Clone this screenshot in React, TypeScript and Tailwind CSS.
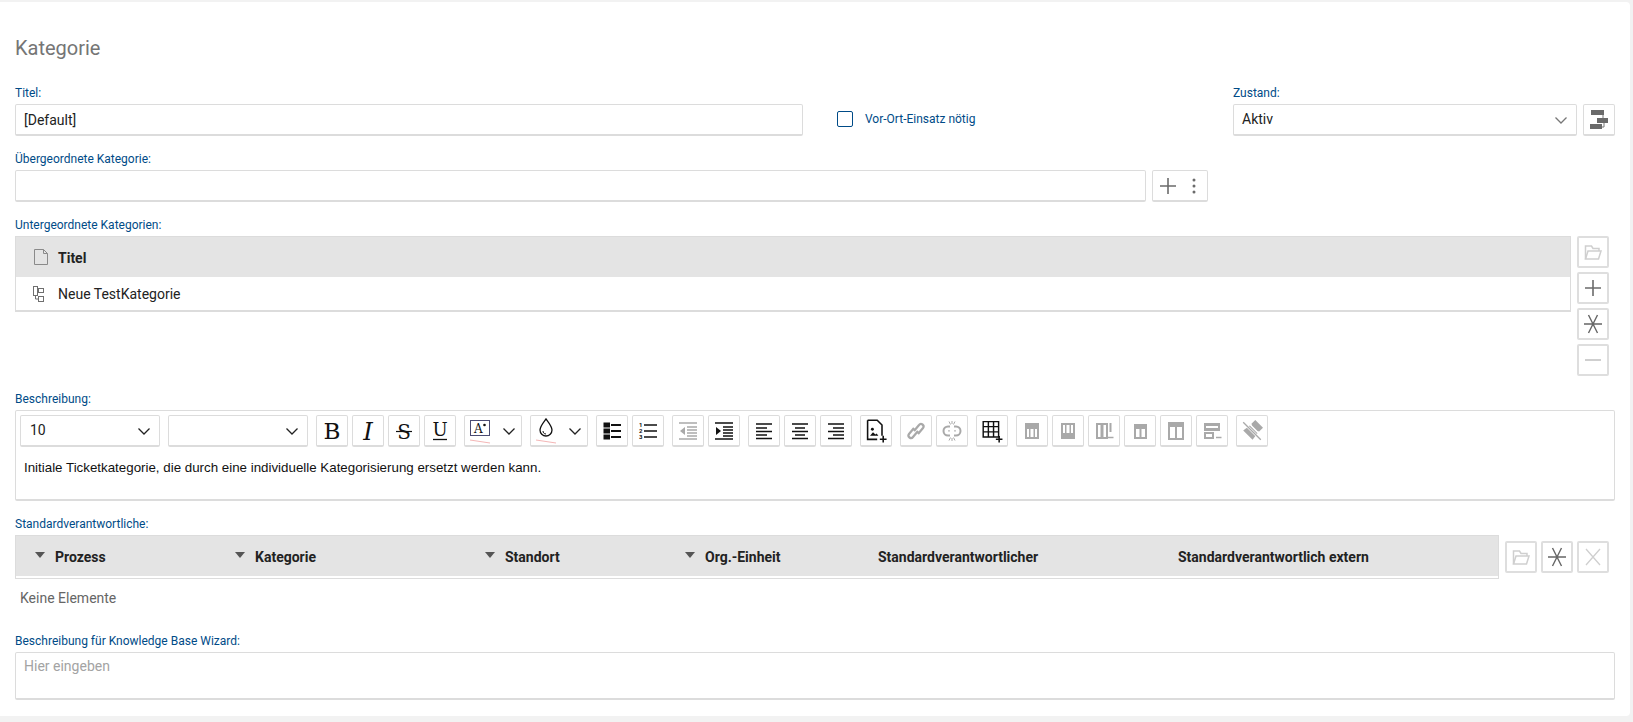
import type { ReactNode } from 'react';

const BLACK = '#111';
const GRAY = '#a9a9a9';

function Label({ children }: { children: ReactNode }) {
  return <div className="mb-[3px] h-4 text-[12px] leading-4 text-[#004b87]">{children}</div>;
}

function Box({ className, children }: { className: string; children?: ReactNode }) {
  return (
    <div className={`flex h-8 items-center rounded-[2px] border border-b-2 border-[#dcdcdc] bg-white ${className}`}>
      {children}
    </div>
  );
}

function Chevron({ className }: { className: string }) {
  return (
    <svg width="14" height="14" viewBox="0 0 14 14" fill="none" stroke="currentColor" strokeWidth="1.3" className={className}>
      <path d="M1.5 4.5 7 10l5.5-5.5" />
    </svg>
  );
}

function SideButton({ children }: { children: ReactNode }) {
  return (
    <button className="flex h-8 w-8 items-center justify-center rounded-[2px] border-2 border-[#dedede] bg-white">
      {children}
    </button>
  );
}

function ToolButton({ children, wide }: { children: ReactNode; wide?: boolean }) {
  return (
    <button
      className={`relative flex h-8 shrink-0 items-center justify-center rounded-[2px] border border-b-2 border-[#dcdcdc] bg-white ${wide ? 'w-[58px]' : 'w-8'}`}
    >
      {children}
    </button>
  );
}

function Ico({ children, size = 20 }: { children: ReactNode; size?: number }) {
  return (
    <svg width={size} height={size} viewBox="0 0 20 20" fill="none" className="overflow-visible">
      {children}
    </svg>
  );
}

function PlusIcon() {
  return (
    <Ico>
      <path d="M10 2v16M2 10h16" stroke="#6b6b6b" strokeWidth="1.6" />
    </Ico>
  );
}

function MinusIcon() {
  return (
    <Ico>
      <path d="M2 10h16" stroke="#c4c4c4" strokeWidth="1.6" />
    </Ico>
  );
}

function AsteriskIcon() {
  return (
    <Ico>
      <path d="M1 10h18M5.500 1l9 18M14.500 1l-9 18" stroke="#666" strokeWidth="1.400" />
    </Ico>
  );
}

function CloseIcon() {
  return (
    <Ico>
      <path d="M3 2l14 16M17 2L3 18" stroke="#cfcfcf" strokeWidth="1.300" />
    </Ico>
  );
}

function FolderIcon() {
  return (
    <Ico>
      <path d="M2.500 17V4h6l1.500 2.500h6V9" stroke="#cfcfcf" strokeWidth="1.500" />
      <path d="M2.500 17 5 9h13l-2.500 8z" stroke="#cfcfcf" strokeWidth="1.500" />
    </Ico>
  );
}

function WorkflowIcon() {
  return (
    <svg width="20" height="19" viewBox="0 0 20 19" fill="none">
      <path d="M14 5v4M15 13v4h-4" stroke="#777" strokeWidth="1" />
      <rect x="2" y="0" width="13" height="5" fill="#6a6a6a" />
      <rect x="8" y="8" width="11" height="5" fill="#6a6a6a" />
      <rect x="1" y="14" width="12" height="5" fill="#6a6a6a" />
    </svg>
  );
}

function DocIcon() {
  return (
    <svg width="14" height="16" viewBox="0 0 14 16" fill="none" stroke="#8a8a8a" strokeWidth="1">
      <path d="M.5.5h9l4 4v11H.500z" />
      <path d="M9.500.5v4h4" />
    </svg>
  );
}

function TreeIcon() {
  return (
    <svg width="11" height="16" viewBox="0 0 11 16" fill="none" stroke="#6f6f6f" strokeWidth="1">
      <rect x=".5" y=".5" width="4" height="9" />
      <rect x="5.500" y="2.500" width="5" height="4" />
      <rect x="5.500" y="10.500" width="5" height="5" />
      <path d="M2.500 9.500v3.500h3" />
    </svg>
  );
}

function SortHead({ children }: { children: ReactNode }) {
  return (
    <div className="flex items-center gap-[10px]">
      <span className="mb-[5px] h-0 w-0 border-x-[5px] border-t-[6px] border-x-transparent border-t-[#555]" />
      <span>{children}</span>
    </div>
  );
}

function ListLines({ x, color, width = 1.800 }: { x: number; color: string; width?: number }) {
  return <path d={`M${x} 4h${19 - x}M${x} 10h${19 - x}M${x} 16h${19 - x}`} stroke={color} strokeWidth={width} />;
}

function IndentIcon({ color, dir }: { color: string; dir: 'in' | 'out' }) {
  return (
    <Ico>
      <path d="M1 2h18M9 6h10M9 9h10M9 12h10M9 15h10M1 18h18" stroke={color} strokeWidth="1.300" />
      <path d={dir === 'in' ? 'M2 6l5 4-5 4z' : 'M7 6l-5 4 5 4z'} fill={color} />
    </Ico>
  );
}

function AlignIcon({ rows }: { rows: string }) {
  return (
    <Ico>
      <path d={rows} stroke={BLACK} strokeWidth="1.300" />
    </Ico>
  );
}

function TableGlyph({ d, minus }: { d: string; minus?: boolean }) {
  return (
    <Ico>
      <path fillRule="evenodd" clipRule="evenodd" d={d} fill={GRAY} />
      {minus && <path d="M14 16.500h5.500" stroke={GRAY} strokeWidth="1.500" />}
    </Ico>
  );
}

function GlyphIcon({ glyph, italic, size, y }: { glyph: string; italic?: boolean; size: number; y: number }) {
  return (
    <text
      x="10"
      y={y}
      textAnchor="middle"
      fontSize={size}
      fontStyle={italic ? 'italic' : 'normal'}
      fontFamily="DejaVu Serif, serif"
      fill={BLACK}
    >
      {glyph}
    </text>
  );
}

function Toolbar() {
  return (
    <div className="flex items-center gap-2">
      <Box className="w-[140px] justify-between pl-[9px] pr-[8px]">
        <span className="text-[14px] text-[#222]">10</span>
        <Chevron className="text-[#222]" />
      </Box>
      <Box className="w-[140px] justify-end pr-[8px]">
        <Chevron className="text-[#222]" />
      </Box>
      <div className="flex gap-1">
        <ToolButton>
          <Ico size={22}>
            <GlyphIcon glyph="B" size={21} y={17.500} />
          </Ico>
        </ToolButton>
        <ToolButton>
          <Ico size={22}>
            <GlyphIcon glyph="I" italic size={22} y={18} />
          </Ico>
        </ToolButton>
        <ToolButton>
          <Ico>
            <GlyphIcon glyph="S" size={20} y={17.500} />
            <path d="M2 10.500h16" stroke={BLACK} strokeWidth="1.200" />
          </Ico>
        </ToolButton>
        <ToolButton>
          <Ico>
            <GlyphIcon glyph="U" size={18} y={15} />
            <path d="M3 18.500h14" stroke={BLACK} strokeWidth="1.300" />
          </Ico>
        </ToolButton>
      </div>
      <div className="flex gap-2">
        <ToolButton wide>
          <div className="flex w-full items-center pl-[4px]">
            <svg width="22" height="28" viewBox="0 0 22 28" fill="none">
              <rect x="1.500" y="3.500" width="19" height="15" stroke="#4b4b73" strokeWidth="1" />
              <text x="5" y="16" fontSize="12" fill="#111" fontFamily="DejaVu Serif, serif">A</text>
              <circle cx="15.500" cy="8" r="1.300" fill="#111" />
              <path d="M1 23l20 3" stroke="#f4b6b6" strokeWidth="1" />
            </svg>
            <Chevron className="ml-[11px] text-[#222]" />
          </div>
        </ToolButton>
        <ToolButton wide>
          <div className="flex w-full items-center pl-[4px]">
            <svg width="22" height="28" viewBox="0 0 22 28" fill="none">
              <path d="M11 2c3 4 6 7.500 6 11a6 6 0 0 1-12 0C5 9.500 8 6 11 2z" stroke="#111" strokeWidth="1.300" />
              <path d="M8 14c0 1.500 1 3 3 3" stroke="#111" strokeWidth="1" />
              <path d="M1 23l20 3" stroke="#f4b6b6" strokeWidth="1" />
            </svg>
            <Chevron className="ml-[11px] text-[#222]" />
          </div>
        </ToolButton>
      </div>
      <div className="flex gap-1">
        <ToolButton>
          <Ico>
            <rect x="1.500" y="1.500" width="6.500" height="5" fill={BLACK} />
            <rect x="1.500" y="7.500" width="6.500" height="5" fill={BLACK} />
            <rect x="1.500" y="13.500" width="6.500" height="5" fill={BLACK} />
            <ListLines x={9} color={BLACK} />
          </Ico>
        </ToolButton>
        <ToolButton>
          <Ico>
            <text x="1" y="6" fontSize="6" fontWeight="700" fill={BLACK}>1</text>
            <text x="1" y="12" fontSize="6" fontWeight="700" fill={BLACK}>2</text>
            <text x="1" y="18" fontSize="6" fontWeight="700" fill={BLACK}>3</text>
            <ListLines x={6} color={BLACK} width={1.500} />
          </Ico>
        </ToolButton>
      </div>
      <div className="flex gap-1">
        <ToolButton>
          <IndentIcon color={GRAY} dir="out" />
        </ToolButton>
        <ToolButton>
          <IndentIcon color={BLACK} dir="in" />
        </ToolButton>
      </div>
      <div className="flex gap-1">
        <ToolButton>
          <AlignIcon rows="M2 3h16M2 7h11M2 10.500h16M2 14h11M2 17.500h16" />
        </ToolButton>
        <ToolButton>
          <AlignIcon rows="M2 3h16M5 7h10M2 10.500h16M5 14h10M2 17.500h16" />
        </ToolButton>
        <ToolButton>
          <AlignIcon rows="M2 3h16M7 7h11M2 10.500h16M7 14h11M2 17.500h16" />
        </ToolButton>
      </div>
      <ToolButton>
        <Ico size={24}>
          <path d="M3 1h8l4 4v9M3 1v16h8" stroke={BLACK} strokeWidth="1.300" />
          <path d="M5 14l2.500-3 2 2 1-1 1.500 2z" fill={BLACK} />
          <circle cx="7" cy="8.500" r="1.200" fill={BLACK} />
          <path d="M16 14v5.500M13.200 16.800h5.600" stroke={BLACK} strokeWidth="1.300" />
        </Ico>
      </ToolButton>
      <div className="flex gap-1">
        <ToolButton>
          <Ico>
            <path d="M8 10l5-6a2.500 2.500 0 0 1 4 3l-5 6M12 10l-5 6a2.500 2.500 0 0 1-4-3l5-6" stroke={GRAY} strokeWidth="2.200" />
          </Ico>
        </ToolButton>
        <ToolButton>
          <Ico>
            <path d="M8 5.500H6a4.500 4.500 0 0 0 0 9h2M12 5.500h2a4.500 4.500 0 0 1 0 9h-2" stroke={GRAY} strokeWidth="2" />
            <path d="M6 9.900h2M12 9.900h2M7 .5l1.500 3M13 .5l-1.500 3M7 19.500l1.500-3M13 19.500l-1.500-3M10 0v3M10 17v3" stroke={GRAY} strokeWidth="1" />
          </Ico>
        </ToolButton>
      </div>
      <ToolButton>
        <Ico size={22}>
          <path d="M2 1.500h14v14H2zM2 6h14M2 10.800h14M6.700 1.500v14M11.400 1.500v14" stroke={BLACK} strokeWidth="1.300" />
          <path d="M16.500 14.500v6M13.500 17.500h6" stroke={BLACK} strokeWidth="1.400" />
        </Ico>
      </ToolButton>
      <div className="flex gap-1">
        <ToolButton>
          <TableGlyph d="M3 2h14v16H3zM5 8v8H7V8zM8.500 8v8h3V8zM13 8v8h2V8z" />
        </ToolButton>
        <ToolButton>
          <TableGlyph d="M3 2h14v16H3zM5 4v8H7V4zM8.500 4v8h3V4zM13 4v8h2V4z" />
        </ToolButton>
        <ToolButton>
          <TableGlyph d="M2 2h12v16H2zM4 4v12H6.500V4zM9.500 4v12H12V4zM15.500 2h2v9h-2z" minus />
        </ToolButton>
        <ToolButton>
          <TableGlyph d="M4 3h13v15H4zM6 8v8H9.500V8zM11.500 8v8H15V8z" />
        </ToolButton>
        <ToolButton>
          <TableGlyph d="M2 1h16v18H2zM4 6v11H9V6zM11 6v11h5V6z" />
        </ToolButton>
        <ToolButton>
          <TableGlyph d="M2 2h16v8H2zM2 11h10v7H2zM4 13v3h6v-3zM4 5v2h12V5z" minus />
        </ToolButton>
      </div>
      <ToolButton>
        <Ico size={22}>
          <path d="M13 0l7 7-3.500 3.500-1.500-.5-5-5-.5-1.500zM8 5l7 7-4.500 6L2 9.500z" fill={GRAY} />
          <path d="M1 1l18 18" stroke="#fff" strokeWidth="2.500" />
          <path d="M2 2l16 16" stroke={GRAY} strokeWidth="1.200" />
        </Ico>
      </ToolButton>
    </div>
  );
}

export default function App() {
  return (
    <div className="h-screen overflow-hidden bg-[#f2f2f2] pr-[3px] pt-[2px] font-['Roboto',sans-serif]">
      <div className="h-[714px] rounded-br-[4px] rounded-tr-[4px] bg-white pl-[15px] pr-[15px] pt-[34px]">
        <h2 className="h-6 text-[20px] leading-6 text-[#757575]">Kategorie</h2>

        <div className="mt-[25px] flex items-end">
          <div className="w-[788px]">
            <Label>Titel:</Label>
            <Box className="px-2 pt-[2px]">
              <span className="text-[14px] text-[#222]">[Default]</span>
            </Box>
          </div>
          <div className="ml-[34px] flex h-8 w-[396px] items-center pb-[2px]">
            <span className="h-4 w-4 rounded-[2px] border-[1.500px] border-[#004b87]" />
            <span className="ml-3 text-[12px] text-[#004b87]">Vor-Ort-Einsatz nötig</span>
          </div>
          <div>
            <Label>Zustand:</Label>
            <div className="flex gap-[6px]">
              <Box className="w-[344px] justify-between pl-2 pr-[8px]">
                <span className="text-[14px] text-[#222]">Aktiv</span>
                <Chevron className="text-[#777]" />
              </Box>
              <Box className="w-8 justify-center">
                <WorkflowIcon />
              </Box>
            </div>
          </div>
        </div>

        <div className="mt-[15px]">
          <Label>Übergeordnete Kategorie:</Label>
          <div className="flex gap-[6px]">
            <Box className="w-[1131px]" />
            <Box className="w-14 pl-[5px]">
              <PlusIcon />
              <svg width="4" height="16" viewBox="0 0 4 16" className="ml-[14px]">
                <circle cx="2" cy="2" r="1.500" fill="#6b6b6b" />
                <circle cx="2" cy="8" r="1.500" fill="#6b6b6b" />
                <circle cx="2" cy="14" r="1.500" fill="#6b6b6b" />
              </svg>
            </Box>
          </div>
        </div>

        <div className="mt-[15px]">
          <Label>Untergeordnete Kategorien:</Label>
          <div className="flex items-start gap-[6px]">
            <div className="h-[76px] w-[1556px] border-x border-t border-b-2 border-[#dcdcdc] text-[14px] text-[#222]">
              <div className="flex h-10 items-center bg-[#e4e4e4] pl-[18px] font-bold">
                <DocIcon />
                <span className="ml-[10px] pt-[2px]">Titel</span>
              </div>
              <div className="flex h-[33px] items-center pl-[17px]">
                <TreeIcon />
                <span className="ml-[14px] pt-[2px]">Neue TestKategorie</span>
              </div>
            </div>
            <div className="flex flex-col gap-1">
              <SideButton>
                <FolderIcon />
              </SideButton>
              <SideButton>
                <PlusIcon />
              </SideButton>
              <SideButton>
                <AsteriskIcon />
              </SideButton>
              <SideButton>
                <MinusIcon />
              </SideButton>
            </div>
          </div>
        </div>

        <div className="mt-[15px]">
          <Label>Beschreibung:</Label>
          <div className="h-[91px] rounded-[2px] border border-b-2 border-[#dcdcdc] px-1 pt-1">
            <Toolbar />
            <p className="ml-[4px] mt-[12px] font-['Liberation_Sans',Arial,sans-serif] text-[13.330px] leading-[18px] text-[#111]">
              Initiale Ticketkategorie, die durch eine individuelle Kategorisierung ersetzt werden kann.
            </p>
          </div>
        </div>

        <div className="mt-[15px]">
          <Label>Standardverantwortliche:</Label>
          <div className="flex items-start gap-[6px]">
            <div className="h-11 w-[1484px] border border-[#dcdcdc]">
              <div className="grid h-10 grid-cols-[200px_250px_200px_193px_300px_1fr] items-center bg-[#e4e4e4] pl-[19px] pt-[2px] text-[14px] font-bold text-[#222]">
                <SortHead>Prozess</SortHead>
                <SortHead>Kategorie</SortHead>
                <SortHead>Standort</SortHead>
                <SortHead>Org.-Einheit</SortHead>
                <span>Standardverantwortlicher</span>
                <span>Standardverantwortlich extern</span>
              </div>
            </div>
            <div className="mt-[6px] flex gap-1">
              <SideButton>
                <FolderIcon />
              </SideButton>
              <SideButton>
                <AsteriskIcon />
              </SideButton>
              <SideButton>
                <CloseIcon />
              </SideButton>
            </div>
          </div>
          <div className="ml-[5px] mt-[10px] h-[18px] text-[14px] leading-[18px] text-[#666]">Keine Elemente</div>
        </div>

        <div className="mt-[26px]">
          <Label>Beschreibung für Knowledge Base Wizard:</Label>
          <div className="h-12 rounded-[2px] border border-b-2 border-[#dcdcdc] px-2 pt-[4px] text-[14px] leading-[18px] text-[#a3a3a3]">
            Hier eingeben
          </div>
        </div>
      </div>
    </div>
  );
}
